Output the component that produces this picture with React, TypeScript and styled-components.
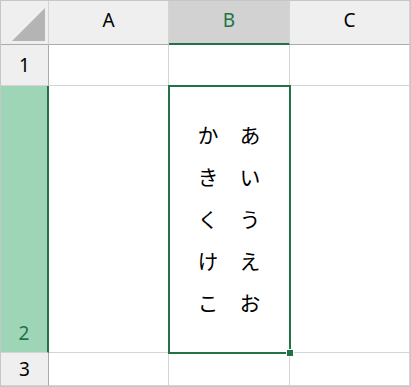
import React from "react";
import styled, {createGlobalStyle} from "styled-components";

const GlobalStyle = createGlobalStyle`
  body {
    margin: 0;
    background: #ffffff;
  }
`;

const GREEN = "#217346";

const StyledSheet = styled.div`
  display: grid;
  grid-template-columns: 48px 120px 121px 120px;
  grid-template-rows: 44px 41px 267px 33px;
  width: fit-content;
  border: 1px solid #c6c6c6;
  font-family: "Noto Sans", "Open Sans", sans-serif;
  color: #000000;
`;

const StyledCorner = styled.div`
  box-sizing: border-box;
  background: #efefef;
  border-right: 1px solid #d4d4d4;
  border-bottom: 1px solid #ababab;
  display: flex;
  align-items: flex-end;
  justify-content: flex-end;
  padding: 0 2px 2px 0;
`;

const StyledColHeader = styled.div<{ $active?: boolean }>`
  box-sizing: border-box;
  display: flex;
  align-items: center;
  justify-content: center;
  padding-bottom: 5px;
  font-size: 19px;
  background: ${p => (p.$active ? "#d2d2d2" : "#efefef")};
  color: ${p => (p.$active ? GREEN : "#000000")};
  border-right: 1px solid #d4d4d4;
  border-bottom: ${p => (p.$active ? `2px solid ${GREEN}` : "1px solid #ababab")};
`;

const StyledRowHeader = styled.div<{ $active?: boolean }>`
  box-sizing: border-box;
  display: flex;
  justify-content: center;
  align-items: ${p => (p.$active ? "flex-end" : "center")};
  padding-bottom: ${p => (p.$active ? "6px" : "0")};
  font-size: 19px;
  background: ${p => (p.$active ? "#9fd5b7" : "#efefef")};
  color: ${p => (p.$active ? GREEN : "#000000")};
  border-right: ${p => (p.$active ? `2px solid ${GREEN}` : "1px solid #ababab")};
  border-bottom: 1px solid #d4d4d4;
`;

const StyledCell = styled.div`
  box-sizing: border-box;
  position: relative;
  display: flex;
  align-items: center;
  justify-content: center;
  border-right: 1px solid #d4d4d4;
  border-bottom: 1px solid #d4d4d4;
`;

const StyledSelection = styled.div`
  position: absolute;
  z-index: 2;
  left: -1px;
  top: -1px;
  right: -2px;
  bottom: -2px;
  border: 2px solid ${GREEN};
  pointer-events: none;
`;

const StyledHandle = styled.div`
  position: absolute;
  right: -4px;
  bottom: -4px;
  width: 6px;
  height: 6px;
  background: ${GREEN};
  box-shadow: 0 0 0 1px #ffffff;
`;

const StyledVerticalText = styled.div`
  writing-mode: vertical-rl;
  font-family: "Noto Sans CJK JP", "Noto Sans", sans-serif;
  font-size: 21px;
  line-height: 42px;
  letter-spacing: 21px;
  margin-bottom: -21px;
`;

function CornerTriangle() {
    return (
        <svg width="34" height="34" viewBox="0 0 34 34">
            <polygon points="0,33 33,33 33,0" fill="#b4b4b4" />
        </svg>
    );
}

export default function App() {
    return (
        <>
            <GlobalStyle />
            <StyledSheet>
                <StyledCorner>
                    <CornerTriangle />
                </StyledCorner>
                <StyledColHeader>A</StyledColHeader>
                <StyledColHeader $active>B</StyledColHeader>
                <StyledColHeader>C</StyledColHeader>

                <StyledRowHeader>1</StyledRowHeader>
                <StyledCell />
                <StyledCell />
                <StyledCell />

                <StyledRowHeader $active>2</StyledRowHeader>
                <StyledCell />
                <StyledCell>
                    <StyledVerticalText>
                        あいうえお
                        <br />
                        かきくけこ
                    </StyledVerticalText>
                    <StyledSelection>
                        <StyledHandle />
                    </StyledSelection>
                </StyledCell>
                <StyledCell />

                <StyledRowHeader>3</StyledRowHeader>
                <StyledCell />
                <StyledCell />
                <StyledCell />
            </StyledSheet>
        </>
    );
}
